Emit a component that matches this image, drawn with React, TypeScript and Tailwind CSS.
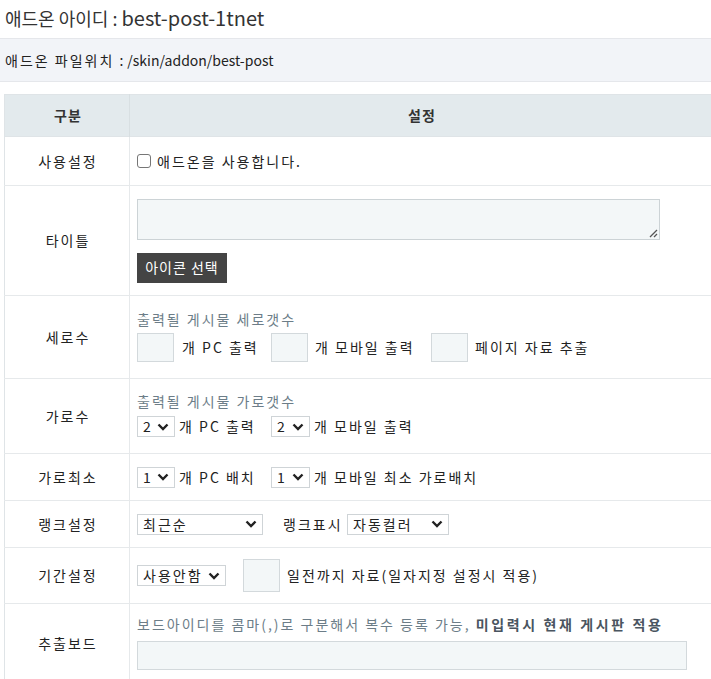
import React from 'react'

const Chevron = () => (
  <svg width="12" height="8" viewBox="0 0 12 8" className="shrink-0">
    <path d="M1.5 1.5 L6 6 L10.5 1.5" fill="none" stroke="#222" strokeWidth="2.4" />
  </svg>
)

type SelectProps = { value: string; width: string }

const FakeSelect = ({ value, width }: SelectProps) => (
  <span
    className={`inline-flex h-[21px] items-center justify-between border border-[#cfd4d7] bg-white pl-[5px] pr-[5px] text-[14px] tracking-[2px] text-[#222] ${width}`}
  >
    <span>{value}</span>
    <Chevron />
  </span>
)

const SmallInput = ({ className = '' }: { className?: string }) => (
  <span className={`inline-block h-[29px] w-[37px] shrink-0 border border-[#d3d9dc] bg-[#f3f7f8] ${className}`} />
)

type RowProps = { label: string; h: string; children: React.ReactNode }

const Row = ({ label, h, children }: RowProps) => (
  <tr className={`${h} border-b border-[#e6e9eb]`}>
    <td className="w-[125px] border-r border-[#e6e9eb] pl-[2px] text-center text-[14px] tracking-[2px] text-[#222]">{label}</td>
    <td className="pl-[7px] text-[14px] tracking-[2px] text-[#222]">{children}</td>
  </tr>
)

export default function App() {
  return (
    <div
      className="w-[711px] overflow-hidden bg-white"
      style={{ fontFamily: '"Noto Sans CJK KR", "Noto Sans", sans-serif' }}
    >
      <h1 className="h-[38px] pl-[5px] pt-[4px] leading-[28px] text-[#333]">
        <span className="text-[18px]">애드온 아이디 : </span>
        <span className="text-[20px]">best-post-1tnet</span>
      </h1>
      <div className="flex h-[44px] items-center border-y border-[#e5e7eb] bg-[#f2f4f8] pl-[5px] text-[14px] text-[#222]">
        <span className="tracking-[2px]">애드온 파일위치 : </span>
        <span className="ml-[2px]">/skin/addon/best-post</span>
      </div>
      <div className="pl-[4px] pt-[12px]">
        <table className="w-[720px] border-collapse border-l border-t border-[#dfe4e7]">
          <tbody>
            <tr className="h-[42px] border-b border-[#dfe4e7] bg-[#e3eaed]">
              <th className="w-[125px] border-r border-[#d8dfe2] pl-[2px] text-center text-[14px] font-bold tracking-[1px] text-[#333]">구분</th>
              <th className="pr-[10px] text-center text-[14px] font-bold tracking-[1px] text-[#333]">설정</th>
            </tr>
            <Row label="사용설정" h="h-[49px]">
              <label className="flex items-center gap-[6px]">
                <span className="inline-block h-[14px] w-[14px] rounded-[3px] border border-[#767676] bg-white" />
                <span>애드온을 사용합니다.</span>
              </label>
            </Row>
            <Row label="타이틀" h="h-[110px]">
              <div className="flex flex-col items-start">
                <div className="relative h-[41px] w-[523px] border border-[#ccd3d6] bg-[#f3f7f8]">
                  <svg width="10" height="10" viewBox="0 0 10 10" className="absolute bottom-[1px] right-[1px]">
                    <path d="M9 2 L2 9 M9 6 L6 9" stroke="#555" strokeWidth="1.3" />
                  </svg>
                </div>
                <button className="mt-[13px] h-[30px] w-[90px] bg-[#444] text-center text-[14px] tracking-[1px] text-white">아이콘 선택</button>
              </div>
            </Row>
            <Row label="세로수" h="h-[83px]">
              <div className="-mt-[3px] text-[#6c7d88]">출력될 게시물 세로갯수</div>
              <div className="mt-[3px] flex items-center">
                <SmallInput />
                <span className="ml-[8px] w-[89px]">개 PC 출력</span>
                <SmallInput />
                <span className="ml-[7px] w-[116px]">개 모바일 출력</span>
                <SmallInput />
                <span className="ml-[7px]">페이지 자료 추출</span>
              </div>
            </Row>
            <Row label="가로수" h="h-[75px]">
              <div className="-mt-[4px] text-[#6c7d88]">출력될 게시물 가로갯수</div>
              <div className="mt-[4px] flex items-center">
                <FakeSelect value="2" width="w-[38px]" />
                <span className="ml-[4px] w-[92px]">개 PC 출력</span>
                <FakeSelect value="2" width="w-[39px]" />
                <span className="ml-[4px]">개 모바일 출력</span>
              </div>
            </Row>
            <Row label="가로최소" h="h-[47px]">
              <div className="flex items-center">
                <FakeSelect value="1" width="w-[38px]" />
                <span className="ml-[4px] w-[92px]">개 PC 배치</span>
                <FakeSelect value="1" width="w-[39px]" />
                <span className="ml-[4px]">개 모바일 최소 가로배치</span>
              </div>
            </Row>
            <Row label="랭크설정" h="h-[47px]">
              <div className="flex items-center">
                <FakeSelect value="최근순" width="w-[126px]" />
                <span className="ml-[20px] w-[64px]">랭크표시</span>
                <FakeSelect value="자동컬러" width="w-[102px]" />
              </div>
            </Row>
            <Row label="기간설정" h="h-[56px]">
              <div className="flex items-center">
                <FakeSelect value="사용안함" width="w-[89px]" />
                <SmallInput className="ml-[17px] !h-[33px]" />
                <span className="ml-[7px]">일전까지 자료(일자지정 설정시 적용)</span>
              </div>
            </Row>
            <Row label="추출보드" h="h-[80px]">
              <div className="-mt-[3px] text-[#6c7d88]">
                보드아이디를 콤마(,)로 구분해서 복수 등록 가능, <b className="tracking-[2.6px] text-[#4a5560]">미입력시 현재 게시판 적용</b>
              </div>
              <div className="mt-[6px] h-[29px] w-[550px] border border-[#d3d9dc] bg-[#f3f7f8]" />
            </Row>
          </tbody>
        </table>
      </div>
    </div>
  )
}
